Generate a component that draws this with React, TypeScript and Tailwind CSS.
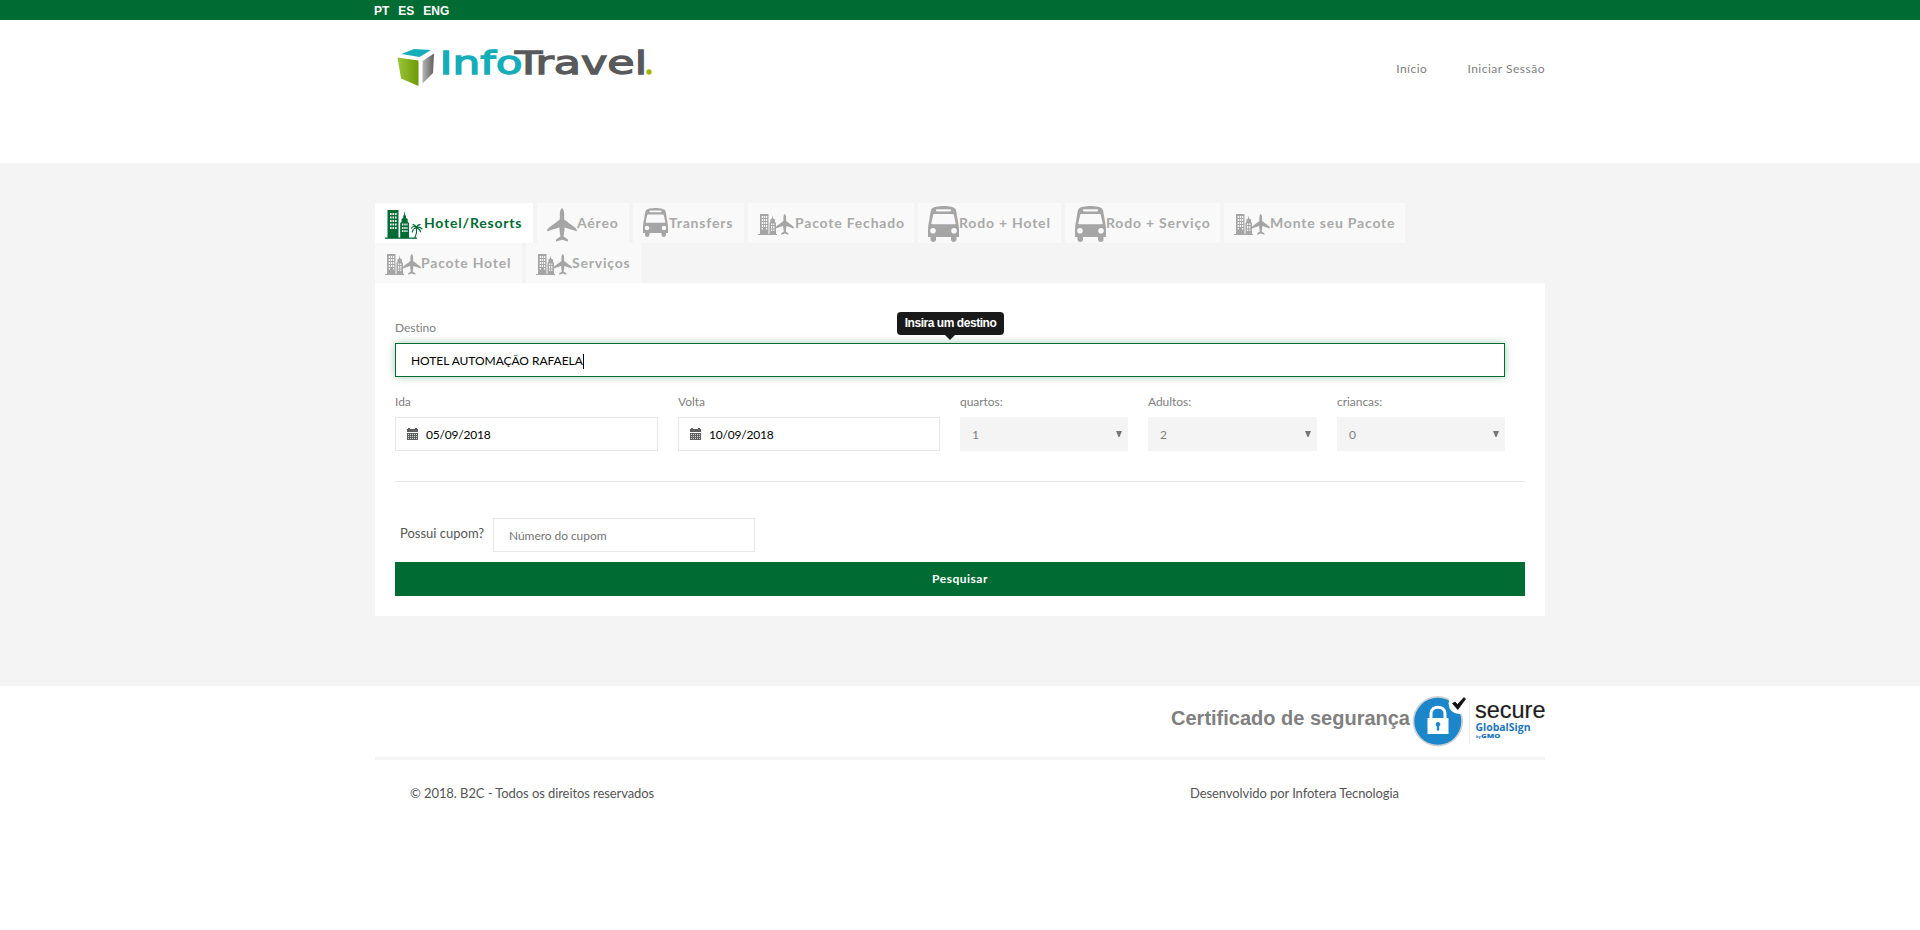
import React from "react";

type IconProps = { className?: string };

const BusIcon = ({ className }: IconProps) => (
  <svg className={className} viewBox="0 0 31 36" preserveAspectRatio="none" fill="#a5a5a5">
    <path
      fillRule="evenodd"
      d="M15.500 0C21 0 25.500 1 27 2.600C28.300 4 28.600 7 29.500 13C30.300 17 31 20 31 24V31H28.500V33.500C28.500 36.700 23 36.700 23 33.500V31H8V33.500C8 36.700 2.500 36.700 2.500 33.500V31H0V24C0 20 .7 17 1.500 13C2.400 7 2.700 4 4 2.600C5.500 1 10 0 15.500 0ZM9 3.200C7.600 3.200 7.600 5.400 9 5.400H22C23.400 5.400 23.400 3.200 22 3.200ZM6.300 8C5.700 8 5.300 8.300 5.200 9L3.400 17C3.200 18 3.500 18.300 4.300 18.300H26.700C27.500 18.300 27.800 18 27.600 17L25.800 9C25.700 8.300 25.300 8 24.700 8ZM5 22A2.800 2.800 0 1 0 5 27.600A2.800 2.800 0 1 0 5 22ZM26 22A2.800 2.800 0 1 0 26 27.600A2.800 2.800 0 1 0 26 22Z"
    />
  </svg>
);

const PLANE =
  "M15 0C16.400 1 17.200 3.500 17.200 6V11.500L28.500 20C29.600 20.900 30 22 29.800 23.300L17.600 19.400C17.500 23 17 26 16.500 28.200L20.600 31.200C21.200 32 21 33 20.800 33.600L15 31.800L9.200 33.600C9 33 8.800 32 9.400 31.200L13.500 28.200C13 26 12.500 23 12.400 19.400L.2 23.300C0 22 .4 20.900 1.500 20L12.800 11.500V6C12.800 3.500 13.600 1 15 0Z";

const PlaneIcon = ({ className }: IconProps) => (
  <svg className={className} viewBox="0 0 30 34" fill="#a5a5a5">
    <path d={PLANE} />
  </svg>
);

const PackageIcon = ({ className }: IconProps) => (
  <svg className={className} viewBox="0 0 36 21" fill="#a5a5a5">
    <path d="M2 0H10.500V21H2Z" />
    <path d="M0 20H19V21H0Z" />
    <path d="M14.600 1.500L15.200 4.500L17 5.500V8L18 9V20.500H11.500V9L12.400 8V5.500L14 4.500Z" />
    <g fill="#f9f9f9">
      <path d="M3.700 2H5V4H3.700ZM5.800 2H7.100V4H5.800ZM7.900 2H9.200V4H7.900ZM3.700 5H5V7H3.700ZM5.800 5H7.100V7H5.800ZM7.900 5H9.200V7H7.900ZM3.700 8H5V10H3.700ZM5.800 8H7.100V10H5.800ZM7.900 8H9.200V10H7.900ZM3.700 11H5V13H3.700ZM5.800 11H7.100V13H5.800ZM7.900 11H9.200V13H7.900ZM3.700 14H5V15.500H3.700ZM7.900 14H9.200V15.500H7.900Z" />
      <path d="M13 9.500H14.200V11H13ZM15.200 9.500H16.400V11H15.200ZM13 12H14.200V14.500H13ZM15.200 12H16.400V14.500H15.200ZM13 15.500H14.200V17H13ZM15.200 15.500H16.400V17H15.200Z" />
    </g>
    <path d={PLANE} transform="translate(17.500 0) scale(.617 .617)" />
  </svg>
);

const HotelIcon = ({ className }: IconProps) => (
  <svg className={className} viewBox="0 0 38 29" fill="#006b33">
    <path d="M2.500 0H13.500V28H2.500Z" />
    <path d="M0 27.500H32V28.800H0Z" />
    <path d="M19.600 1L20.200 5L21 6V8L22.700 9V12L24 13V28H15.200V13L16.500 12V9L18.200 8V6L19 5Z" />
    <g fill="#fff">
      <path d="M5 3H6.600V5H5ZM7.500 3H9.100V5H7.500ZM10 3H11.600V5H10ZM5 6.500H6.600V8.500H5ZM7.500 6.500H9.100V8.500H7.500ZM10 6.500H11.600V8.500H10ZM5 10H6.600V12H5ZM7.500 10H9.100V12H7.500ZM10 10H11.600V12H10ZM5 13.500H6.600V15.500H5ZM7.500 13.500H9.100V15.500H7.500ZM10 13.500H11.600V15.500H10ZM5 17H6.600V19H5ZM7.500 17H9.100V19H7.500ZM10 17H11.600V19H10Z" />
      <path d="M17 13.500H18.400V15.500H17ZM19.300 13.500H20.600V15.500H19.300ZM21.400 13.500H22.500V15.500H21.400ZM17 17H18.400V19H17ZM19.300 17H20.600V19H19.300ZM21.400 17H22.500V19H21.400ZM17 20.300H18.400V22H17ZM19.300 20.300H20.600V22H19.300ZM21.400 20.300H22.500V22H21.400Z" />
    </g>
    <g fill="none" stroke="#006b33" strokeLinecap="round">
      <path d="M31.500 18C32 21.500 31.300 25 29.800 28" strokeWidth="1.100" />
      <path d="M31.500 18C29.500 16 28 16 26.600 18M31.500 18C29.500 18 27.800 19.500 27.400 22M31.500 18C30.500 15.500 29.500 14.600 28 14.600M31.500 18C32 15.500 33 14.500 35 14.600M31.500 18C33.500 16.500 35.500 17 37 18.800M31.500 18C34 18.500 35.200 20 35.600 22" strokeWidth="1.200" />
    </g>
  </svg>
);

const CalendarIcon = () => (
  <svg className="h-3 w-[11px] shrink-0" viewBox="0 0 11 12" fill="#5e5e5e" shapeRendering="crispEdges">
    <path d="M0 1H1V0H3V1H8V0H10V1H11V4H0Z" />
    <path d="M0 5H11V12H0Z" />
    <path
      fill="#d8dcd8"
      d="M1 6h1v1h-1zM3 6h1v1h-1zM5 6h1v1h-1zM7 6h1v1h-1zM9 6h1v1h-1zM1 8h1v1h-1zM3 8h1v1h-1zM5 8h1v1h-1zM7 8h1v1h-1zM9 8h1v1h-1zM1 10h1v1h-1zM3 10h1v1h-1zM5 10h1v1h-1zM7 10h1v1h-1zM9 10h1v1h-1z"
    />
  </svg>
);

const Logo = () => (
  <svg className="h-10 w-[260px] overflow-visible" viewBox="396 46 260 40">
    <defs>
      <linearGradient id="cubeGreen" x1="0" y1="0" x2="1" y2="0">
        <stop offset="0" stopColor="#9cc53b" />
        <stop offset="1" stopColor="#6c9a05" />
      </linearGradient>
      <linearGradient id="cubeGray" x1="0" y1="0" x2="1" y2="0">
        <stop offset="0" stopColor="#b5b5b5" />
        <stop offset="1" stopColor="#5f5f5f" />
      </linearGradient>
    </defs>
    <path d="M401.500 54L414 49L431 50L419.500 57Z" fill="#14adb9" />
    <path d="M397.500 57.500L418.500 60.500V86L401 78.500Z" fill="url(#cubeGreen)" />
    <path d="M422.500 61L434 53.500L433 73L422.500 83.500Z" fill="url(#cubeGray)" />
    <g fontFamily="'DejaVu Sans', sans-serif" fontSize="32" strokeWidth="1.300">
      <text x="439.500" y="74" textLength="83" lengthAdjust="spacingAndGlyphs" fill="#14adb9" stroke="#14adb9">
        Info
      </text>
      <text x="515" y="74" textLength="132" lengthAdjust="spacingAndGlyphs" fill="#58595b" stroke="#58595b">
        Travel
      </text>
    </g>
    <circle cx="649" cy="72" r="2.700" fill="#a3b906" />
  </svg>
);

const SecureSeal = () => (
  <svg className="h-[52px] w-[134px] overflow-visible" viewBox="1411 695 134 52">
    <circle cx="1437.800" cy="721.300" r="25.200" fill="#cfd0d2" />
    <circle cx="1437.800" cy="721.300" r="23.500" fill="#1c86cb" />
    <circle cx="1459" cy="703.500" r="10.500" fill="#fff" />
    <path d="M1427.500 718H1448.500V734H1427.500Z" fill="#fff" />
    <path d="M1431 719V713.500C1431 705 1445 705 1445 713.500V719" fill="none" stroke="#fff" strokeWidth="3" />
    <path d="M1438 722A2.300 2.300 0 0 1 1439.200 726.300V730.500H1436.800V726.300A2.300 2.300 0 0 1 1438 722Z" fill="#1c86cb" />
    <path d="M1452.500 703.500L1455 702L1457.500 704.500L1464 697.500L1465.500 699L1457.800 709.500Z" fill="#111" stroke="#111" strokeWidth=".8" />
    <path d="M1469.500 699V744" stroke="#ededed" />
    <text x="1475" y="717.500" textLength="70.500" lengthAdjust="spacingAndGlyphs" fontFamily="'Liberation Sans', sans-serif" fontSize="23" fill="#1d1d1d" stroke="#1d1d1d" strokeWidth=".2">
      secure
    </text>
    <text x="1475.500" y="731" textLength="55" lengthAdjust="spacingAndGlyphs" fontFamily="'Open Sans', sans-serif" fontWeight="700" fontSize="11" fill="#1b75bc">
      GlobalSign
    </text>
    <text x="1476" y="738" fontFamily="'Open Sans', sans-serif" fontWeight="700" fontSize="4" fill="#1b75bc">
      by
    </text>
    <text x="1481" y="738" textLength="19.500" lengthAdjust="spacingAndGlyphs" fontFamily="'Open Sans', sans-serif" fontWeight="800" fontSize="5.800" fill="#1b75bc">
      GMO
    </text>
  </svg>
);

type Tab = { label: string; icon: React.ReactNode; width: string; active?: boolean };

const tabs: Tab[] = [
  { label: "Hotel/Resorts", icon: <HotelIcon className="mt-[5px] mr-px h-[29px] w-[38px]" />, width: "w-[158px]", active: true },
  { label: "Aéreo", icon: <PlaneIcon className="mt-[5px] h-[34px] w-[30px]" />, width: "w-[92px]" },
  { label: "Transfers", icon: <BusIcon className="mr-px h-[29px] w-[25px]" />, width: "w-[111px]" },
  { label: "Pacote Fechado", icon: <PackageIcon className="mt-[5px] mr-px h-[21px] w-9" />, width: "w-[166px]" },
  { label: "Rodo + Hotel", icon: <BusIcon className="mt-[3px] h-9 w-[31px]" />, width: "w-[143px]" },
  { label: "Rodo + Serviço", icon: <BusIcon className="mt-[3px] h-9 w-[31px]" />, width: "w-[155px]" },
  { label: "Monte seu Pacote", icon: <PackageIcon className="mt-[5px] h-[21px] w-9" />, width: "w-[181px]" },
  { label: "Pacote Hotel", icon: <PackageIcon className="mt-[5px] h-[21px] w-9" />, width: "w-[147px]" },
  { label: "Serviços", icon: <PackageIcon className="mt-[5px] h-[21px] w-9" />, width: "w-[115px]" },
];

const Label = ({ children }: { children: React.ReactNode }) => (
  <div className="h-[22px] text-[12px] leading-[14px] tracking-[-0.05px] text-[#808080]">{children}</div>
);

const DateField = ({ label, value, width }: { label: string; value: string; width: string }) => (
  <div className={width}>
    <Label>{label}</Label>
    <div className="flex h-[34px] items-center gap-2 border border-[#e8e8e8] pl-[11px] text-[12px] text-black">
      <CalendarIcon />
      <span className="pt-px tracking-[-0.2px]">{value}</span>
    </div>
  </div>
);

const SelectField = ({ label, value, width }: { label: string; value: string; width: string }) => (
  <div className={width}>
    <Label>{label}</Label>
    <div className="flex h-[34px] items-center justify-between bg-[#f4f4f4] pr-1.5 pl-3 text-[12px] text-[#808080]">
      <span className="pt-px">{value}</span>
      <svg className="h-1.5 w-1.5" viewBox="0 0 6 6" fill="#777">
        <path d="M0 0H6L3.500 6H2.500Z" />
      </svg>
    </div>
  </div>
);

export default function App() {
  return (
    <div className="flex min-h-[930px] flex-col bg-white font-['Lato',sans-serif]">
      <div className="h-5 bg-[#006b33]">
        <div className="mx-auto flex w-[1170px] gap-[9px] pt-1 font-['Liberation_Sans',sans-serif] text-[12px] leading-[15px] font-bold text-white">
          <span className="-ml-px">PT</span>
          <span>ES</span>
          <span>ENG</span>
        </div>
      </div>

      <header className="mx-auto flex h-[143px] w-[1170px] items-start justify-between">
        <div className="pt-[26px] pl-[21px]">
          <Logo />
        </div>
        <nav className="flex gap-10 pt-[41px] text-[12px] leading-4 tracking-[0.5px] text-[#808080]">
          <span>Início</span>
          <span>Iniciar Sessão</span>
        </nav>
      </header>

      <main className="h-[523px] bg-[#f4f4f4] pt-10">
        <div className="mx-auto w-[1170px]">
          <div className="flex flex-wrap gap-x-1">
            {tabs.map((t) => (
              <div
                key={t.label}
                className={`flex h-10 items-center overflow-hidden pb-0.5 pl-2.5 text-[14px] font-bold tracking-[0.8px] whitespace-nowrap ${t.width} ${
                  t.active ? "bg-white text-[#006b33]" : "bg-[#f9f9f9] text-[#a9a9a9]"
                }`}
              >
                <span className="shrink-0">{t.icon}</span>
                <span>{t.label}</span>
              </div>
            ))}
          </div>

          <section className="h-[333px] bg-white px-5 pt-[38px]">
            <div className="relative w-[1110px]">
              <Label>Destino</Label>
              <div className="flex h-[34px] items-center border border-[#006b33] pt-0.5 pl-[15px] text-[12px] text-black shadow-[0_0_8px_rgba(0,107,51,0.35)]">
                <span className="tracking-[-0.04px]">HOTEL AUTOMAÇÃO RAFAELA</span>
                <span className="h-[15px] w-px bg-black" />
              </div>
              <div className="absolute -top-[9px] left-[502px] flex flex-col items-center">
                <div className="flex h-[23px] w-[107px] items-center justify-center rounded bg-[#1a1a1a] pb-px font-['Liberation_Sans',sans-serif] text-[12px] font-bold tracking-[-0.45px] whitespace-nowrap text-white">
                  Insira um destino
                </div>
                <div className="mr-0.5 h-0 w-0 border-x-[5px] border-t-[5px] border-x-transparent border-t-[#1a1a1a]" />
              </div>
            </div>

            <div className="mt-[18px] flex w-[1110px] justify-between">
              <DateField label="Ida" value="05/09/2018" width="w-[263px]" />
              <DateField label="Volta" value="10/09/2018" width="w-[262px]" />
              <SelectField label="quartos:" value="1" width="w-[168px]" />
              <SelectField label="Adultos:" value="2" width="w-[169px]" />
              <SelectField label="criancas:" value="0" width="w-[168px]" />
            </div>

            <hr className="mt-[30px] border-[#e6e6e6]" />

            <div className="mt-9 flex h-[34px] items-center pl-[5px]">
              <span className="w-[93px] pb-[3px] text-[13px] text-[#555]">Possui cupom?</span>
              <div className="flex h-[34px] w-[262px] items-center border border-[#e8e8e8] pt-0.5 pl-[15px] text-[12px] tracking-[-0.06px] text-[#757575]">
                Número do cupom
              </div>
            </div>
            <button className="mt-2.5 block h-[34px] w-full bg-[#006b33] text-[12px] font-bold tracking-[0.5px] text-white">
              Pesquisar
            </button>
          </section>
        </div>
      </main>

      <footer className="mx-auto w-[1170px]">
        <div className="flex h-[71px] justify-end pt-[9px]">
          <span className="pt-[9px] pr-px font-['Liberation_Sans',sans-serif] text-[20px] leading-7 font-bold text-[#808080]">
            Certificado de segurança
          </span>
          <SecureSeal />
        </div>
        <div className="h-[3px] bg-[#f4f4f4]" />
        <div className="flex pt-[23px] pl-[35px] text-[13px] leading-5 tracking-[-0.08px] text-[#555]">
          <span className="w-[780px]">© 2018. B2C - Todos os direitos reservados</span>
          <span>Desenvolvido por Infotera Tecnologia</span>
        </div>
      </footer>
    </div>
  );
}
